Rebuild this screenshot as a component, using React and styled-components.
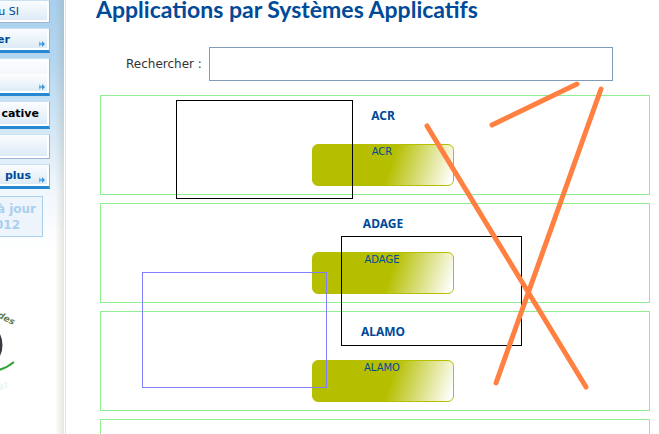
import React from "react";
import styled, { createGlobalStyle } from "styled-components";

const Global = createGlobalStyle`
  * { box-sizing: border-box; }
  body { margin: 0; background: #fff; font-family: "DejaVu Sans", Verdana, sans-serif; }
`;

const Page = styled.div`
  position: relative;
  display: flex;
  height: 100vh;
  overflow: hidden;
`;

const Sidebar = styled.aside`
  flex: 0 0 66px;
  overflow: hidden;
  border-right: 1px solid #e6e1dc;
  background:
    linear-gradient(to right, transparent 55px, rgba(150, 140, 115, 0.22) 64px, #fff 64px),
    linear-gradient(to bottom, #a8cfed 0, #b4d6f0 60px, #d3e7f6 130px, #f0f7fc 190px, #fff 250px);
`;

const Menu = styled.nav`
  display: flex;
  flex-direction: column;
  gap: 5px;
  width: 50px;
`;

const MenuItem = styled.a`
  position: relative;
  display: flex;
  align-items: center;
  justify-content: flex-end;
  height: ${(p) => p.$height}px;
  padding-right: ${(p) => p.$inset || 0}px;
  border-top: 1px solid #c9e0f3;
  border-right: 1px solid #9fb4d3;
  border-bottom: ${(p) => (p.$active ? "3px solid #2687d3" : "1px solid #9fb4d3")};
  box-shadow: inset -2px -2px 0 #fff;
  background: linear-gradient(to bottom, #fbfdff, ${(p) => (p.$tall ? "#f4f7fc 43%, #fff 44%," : "")} #dae9f5);
  color: ${(p) => (p.$dark ? "#000" : "#004a99")};
  font-size: 11px;
  font-weight: ${(p) => (p.$plain ? 400 : 700)};
  line-height: 14px;
  white-space: nowrap;
  text-decoration: none;
`;

const Arrow = styled.svg`
  position: absolute;
  right: 4px;
  bottom: 3px;
  width: 6px;
  height: 6px;
`;

const Updated = styled.p`
  width: 43px;
  height: 41px;
  margin: 7px 0 0;
  padding: 4px 6px 0 0;
  border: 1px solid #a9cfed;
  border-left: 0;
  background: #edf4fb;
  color: #a9cfed;
  font-size: 12px;
  font-weight: 700;
  line-height: 16px;
  white-space: nowrap;
`;

const UpdatedLine = styled.span`
  display: flex;
  justify-content: flex-end;
  padding-right: ${(p) => p.$inset || 0}px;
`;

const Logo = styled.svg`
  display: block;
  width: 50px;
  height: 100px;
  margin-top: 63px;
`;

const Main = styled.main`
  flex: 1;
  min-width: 0;
  padding: 0 9px 0 34px;
`;

const Title = styled.h1`
  margin: -5px 0 0 -4px;
  color: #004a99;
  font-family: Lato, "Trebuchet MS", sans-serif;
  font-size: 23px;
  font-weight: 700;
  line-height: 28px;
  white-space: nowrap;
`;

const Search = styled.form`
  display: flex;
  align-items: center;
  gap: 7px;
  margin: 24px 37px 14px 26px;
`;

const SearchLabel = styled.label`
  color: #333;
  font-size: 12px;
  line-height: 16px;
`;

const SearchInput = styled.input`
  flex: 1;
  min-width: 0;
  height: 34px;
  border: 1px solid #7f9db9;
  background: #fff;
  font: inherit;
`;

const Cards = styled.div`
  display: flex;
  flex-direction: column;
  gap: 8px;
`;

const Card = styled.section`
  display: flex;
  flex-direction: column;
  align-items: center;
  height: 100px;
  padding: 12px 0 0 16px;
  border: 1px solid #90ee90;
`;

const CardTitle = styled.h2`
  margin: 0 0 20px;
  color: #004a99;
  font-family: "Noto Sans", "Trebuchet MS", sans-serif;
  font-size: 12px;
  font-weight: 700;
  line-height: 16px;
`;

const AppButton = styled.button`
  display: flex;
  justify-content: center;
  width: 142px;
  height: 42px;
  padding: 1px 2px 0 0;
  border: 1px solid #b5bf00;
  border-radius: 6px;
  background: linear-gradient(108deg, #b5bf00 55%, #fff 98%);
  color: #004a99;
  font-family: inherit;
  font-size: 10px;
  line-height: 12px;
`;

const Annotations = styled.svg`
  position: absolute;
  top: 0;
  left: 0;
  width: 659px;
  height: 434px;
  pointer-events: none;
`;

const DoubleArrow = () => (
  <Arrow viewBox="0 0 6 6" aria-hidden="true">
    <path d="M0 0v6l3-3z" fill="#8fc2e8" />
    <path d="M3 0v6l3-3z" fill="#3c94d4" />
    <path d="M0 3h5" stroke="#3c94d4" />
  </Arrow>
);

const items = [
  { text: "u SI", height: 23, inset: 30, plain: true },
  { text: "er", height: 25, inset: 39, active: true, arrow: true },
  { text: "", height: 38, active: true, arrow: true, tall: true },
  { text: "cative", height: 28, inset: 10, active: true, dark: true },
  { text: "", height: 25 },
  { text: "plus", height: 25, inset: 18, active: true, arrow: true },
];

const apps = ["ACR", "ADAGE", "ALAMO"];

export default function App() {
  return (
    <Page>
      <Global />
      <Sidebar>
        <Menu>
          {items.map((item, i) => (
            <MenuItem
              key={i}
              href="#"
              $height={item.height}
              $inset={item.inset}
              $active={item.active}
              $plain={item.plain}
              $dark={item.dark}
              $tall={item.tall}
            >
              {item.text}
              {item.arrow && <DoubleArrow />}
            </MenuItem>
          ))}
        </Menu>
        <Updated>
          <UpdatedLine>à jour</UpdatedLine>
          <UpdatedLine $inset={16}>012</UpdatedLine>
        </Updated>
        <Logo viewBox="0 300 50 100" aria-hidden="true">
          <circle cx="-22" cy="345" r="23" fill="#2f8f3c" stroke="#3a3a42" strokeWidth="3" />
          <path d="M-10 371Q3 371 14 362" fill="none" stroke="#2fa336" strokeWidth="2" />
          <text x="-3" y="317" transform="rotate(27 -3 317)" fontSize="9" fontWeight="700" fontStyle="italic" fill="#607a50">des</text>
          <text x="-3" y="392" transform="rotate(-27 -3 392)" fontSize="9" fill="#e2f3e2">rez</text>
        </Logo>
      </Sidebar>
      <Main>
        <Title>Applications par Systèmes Applicatifs</Title>
        <Search>
          <SearchLabel htmlFor="search">Rechercher :</SearchLabel>
          <SearchInput id="search" type="text" />
        </Search>
        <Cards>
          {apps.map((name) => (
            <Card key={name}>
              <CardTitle>{name}</CardTitle>
              <AppButton type="button">{name}</AppButton>
            </Card>
          ))}
          <Card />
        </Cards>
      </Main>
      <Annotations viewBox="0 0 659 434" aria-hidden="true">
        <g fill="none" stroke="#000" shapeRendering="crispEdges">
          <rect x="176.5" y="100.5" width="176" height="98" />
          <rect x="341.5" y="236.5" width="180" height="109" />
          <rect x="142.5" y="272.5" width="184" height="115" stroke="#8080ff" />
        </g>
        <g stroke="#ff8040" strokeWidth="5" strokeLinecap="round">
          <path d="M577 84L492 125M601 89L496 383M427 126L586 387" />
        </g>
      </Annotations>
    </Page>
  );
}
